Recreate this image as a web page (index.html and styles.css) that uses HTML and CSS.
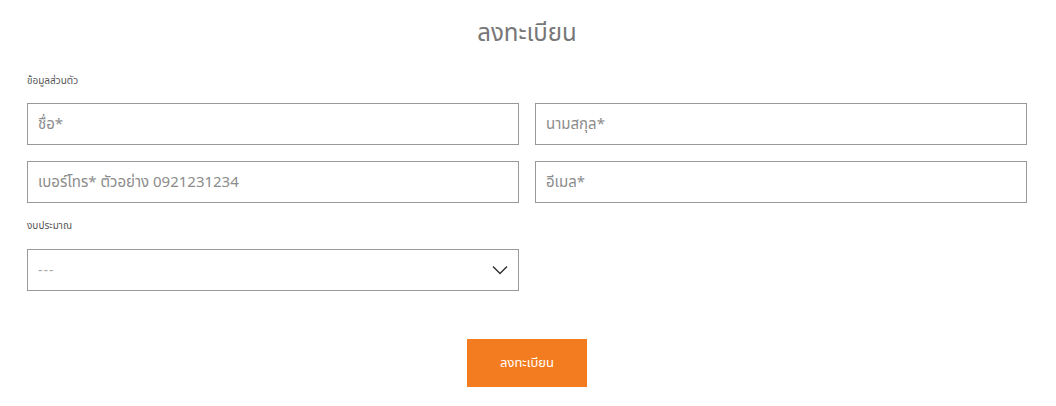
FILE: index.html
```html
<!DOCTYPE html>
<html lang="th">
<head>
<meta charset="utf-8">
<link rel="stylesheet" href="styles.css">
</head>
<body>
<form class="form">
  <h1 class="title">ลงทะเบียน</h1>
  <div class="label label-first">ข้อมูลส่วนตัว</div>
  <div class="grid">
    <div class="field">ชื่อ*</div>
    <div class="field">นามสกุล*</div>
    <div class="field">เบอร์โทร* ตัวอย่าง 0921231234</div>
    <div class="field">อีเมล*</div>
  </div>
  <div class="label label-budget">งบประมาณ</div>
  <div class="grid">
    <div class="field select">
      <span class="dash">---</span>
      <svg class="chev" width="16" height="10" viewBox="0 0 16 10"><path d="M1 1.5 L8 8.5 L15 1.5" fill="none" stroke="#333" stroke-width="1.5"/></svg>
    </div>
  </div>
  <div class="actions">
    <button type="button" class="btn">ลงทะเบียน</button>
  </div>
</form>
</body>
</html>
```
FILE: styles.css
```css
* { box-sizing: border-box; }
body {
  margin: 0;
  background: #fff;
  font-family: "Noto Sans Thai", "Noto Sans", "DejaVu Sans", sans-serif;
}
.form {
  width: 1000px;
  margin: 0 0 0 27px;
  padding-top: 18px;
}
.title {
  margin: 0;
  text-align: center;
  font-size: 24px;
  font-weight: 400;
  color: #777;
  line-height: 32px;
}
.label {
  font-size: 10px;
  color: #555;
  line-height: 14px;
}
.label-first { margin-top: 24px; margin-bottom: 15px; }
.label-budget { margin-top: 16px; margin-bottom: 16px; }
.grid {
  display: grid;
  grid-template-columns: 492px 492px;
  column-gap: 16px;
  row-gap: 16px;
}
.field {
  height: 42px;
  border: 1px solid #999;
  padding: 0 10px;
  display: flex;
  align-items: center;
  font-size: 15px;
  color: #8c8c8c;
}
.select { justify-content: space-between; }
.dash { color: #aaa; font-size: 14px; letter-spacing: 1px; }
.actions {
  display: flex;
  justify-content: center;
  margin-top: 48px;
}
.btn {
  width: 120px;
  height: 48px;
  border: 0;
  background: #f47c20;
  color: #fff;
  font-family: inherit;
  font-size: 13px;
  padding: 0;
}
```
